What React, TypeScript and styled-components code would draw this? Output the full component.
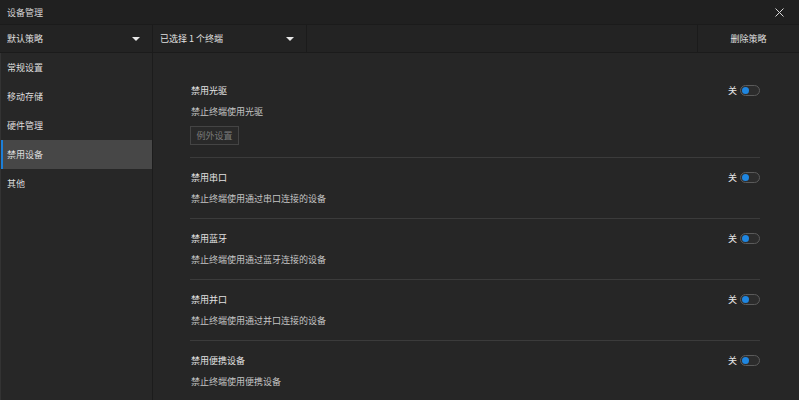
import React, { useState } from "react";
import styled, { createGlobalStyle } from "styled-components";

const GlobalStyle = createGlobalStyle`
  html, body {
    margin: 0;
    padding: 0;
    background: #262626;
  }
  body {
    font-family: "Noto Sans CJK SC", "Noto Sans", sans-serif;
  }
`;

const menuItems = ["常规设置", "移动存储", "硬件管理", "禁用设备", "其他"];

const devices = [
  { title: "禁用光驱", desc: "禁止终端使用光驱", exception: true },
  { title: "禁用串口", desc: "禁止终端使用通过串口连接的设备" },
  { title: "禁用蓝牙", desc: "禁止终端使用通过蓝牙连接的设备" },
  { title: "禁用并口", desc: "禁止终端使用通过并口连接的设备" },
  { title: "禁用便携设备", desc: "禁止终端使用便携设备" },
];

export default function App() {
  const [selected, setSelected] = useState("禁用设备");
  return (
    <>
      <GlobalStyle />
      <Window>
        <TitleBar>
          <span>设备管理</span>
          <CloseButton>
            <svg width="9" height="9" viewBox="0 0 9 9">
              <path d="M0.5 0.5 L8.5 8.5 M8.5 0.5 L0.5 8.5" stroke="#d8d8d8" strokeWidth="1" />
            </svg>
          </CloseButton>
        </TitleBar>
        <Toolbar>
          <Dropdown width={153}>
            <span>默认策略</span>
            <Caret />
          </Dropdown>
          <Dropdown width={154}>
            <span>已选择 1 个终端</span>
            <Caret />
          </Dropdown>
          <Spacer />
          <ToolButton>删除策略</ToolButton>
        </Toolbar>
        <Body>
          <Sidebar>
            {menuItems.map((m) => (
              <MenuItem key={m} active={selected === m} onClick={() => setSelected(m)}>
                {m}
              </MenuItem>
            ))}
          </Sidebar>
          <Content>
            {devices.map((d, i) => (
              <Section key={d.title} first={i === 0} last={i === devices.length - 1}>
                <SectionHead>
                  <Title>{d.title}</Title>
                  <SwitchWrap>
                    <SwitchLabel>关</SwitchLabel>
                    <Switch>
                      <Knob />
                    </Switch>
                  </SwitchWrap>
                </SectionHead>
                <Desc>{d.desc}</Desc>
                {d.exception && <GhostButton>例外设置</GhostButton>}
              </Section>
            ))}
          </Content>
        </Body>
      </Window>
    </>
  );
}

const Window = styled.div`
  width: 799px;
  height: 400px;
  display: flex;
  flex-direction: column;
  background: #262626;
  color: #dcdcdc;
  font-size: 9px;
  overflow: hidden;
`;

const TitleBar = styled.div`
  height: 24px;
  display: flex;
  align-items: center;
  justify-content: space-between;
  padding: 0 9px 0 7px;
  background: #202020;
  color: #d4d4d4;
`;

const CloseButton = styled.div`
  width: 14px;
  height: 14px;
  display: flex;
  align-items: center;
  justify-content: center;
  margin-right: 4px;
`;

const Toolbar = styled.div`
  height: 27px;
  display: flex;
  background: #232323;
  border-top: 1px solid #1b1b1b;
  border-bottom: 1px solid #1b1b1b;
`;

const Dropdown = styled.div<{ width: number }>`
  width: ${({ width }) => width}px;
  display: flex;
  align-items: center;
  justify-content: space-between;
  padding: 0 12px 0 7px;
  box-sizing: border-box;
  border-right: 1px solid #1b1b1b;
  color: #e0e0e0;
`;

const Caret = styled.span`
  width: 0;
  height: 0;
  border-left: 4px solid transparent;
  border-right: 4px solid transparent;
  border-top: 4px solid #e8e8e8;
`;

const Spacer = styled.div`
  flex: 1;
  border-right: 1px solid #1b1b1b;
`;

const ToolButton = styled.div`
  width: 101px;
  display: flex;
  align-items: center;
  justify-content: center;
  color: #e0e0e0;
`;

const Body = styled.div`
  flex: 1;
  display: flex;
  min-height: 0;
`;

const Sidebar = styled.div`
  width: 153px;
  background: #272727;
  border-right: 1px solid #1c1c1c;
  border-left: 1px solid #333;
  box-sizing: border-box;
  display: flex;
  flex-direction: column;
`;

const MenuItem = styled.div<{ active: boolean }>`
  height: 29px;
  display: flex;
  align-items: center;
  padding-left: ${({ active }) => (active ? 4 : 6)}px;
  color: #dedede;
  background: ${({ active }) => (active ? "#474747" : "transparent")};
  border-left: ${({ active }) => (active ? "2px solid #1c7fd8" : "none")};
  cursor: pointer;
`;

const Content = styled.div`
  flex: 1;
  padding: 0 39px 0 37px;
  display: flex;
  flex-direction: column;
`;

const Section = styled.div<{ first: boolean; last: boolean }>`
  padding: ${({ first }) => (first ? "27px 0 12px" : "9px 0 9px")};
  border-bottom: ${({ last }) => (last ? "none" : "1px solid #3b3b3b")};
  display: flex;
  flex-direction: column;
  align-items: flex-start;
`;

const SectionHead = styled.div`
  width: 100%;
  height: 20px;
  display: flex;
  align-items: center;
  justify-content: space-between;
`;

const Title = styled.span`
  color: #e2e2e2;
  padding-left: 1px;
`;

const Desc = styled.div`
  margin-top: 2px;
  height: 20px;
  line-height: 20px;
  color: #c4c4c4;
  padding-left: 1px;
`;

const GhostButton = styled.div`
  margin-top: 4px;
  width: 49px;
  height: 19px;
  box-sizing: border-box;
  display: flex;
  align-items: center;
  justify-content: center;
  border: 1px solid #444;
  background: #292929;
  color: #7a7a7a;
`;

const SwitchWrap = styled.div`
  display: flex;
  align-items: center;
  gap: 3px;
`;

const SwitchLabel = styled.span`
  color: #e8e8e8;
`;

const Switch = styled.div`
  width: 20px;
  height: 11px;
  box-sizing: border-box;
  border: 1px solid #5a5a5a;
  border-radius: 6px;
  background: #2c2c2c;
  display: flex;
  align-items: center;
  padding-left: 1px;
`;

const Knob = styled.div`
  width: 7px;
  height: 7px;
  border-radius: 50%;
  background: #1f86e0;
`;
